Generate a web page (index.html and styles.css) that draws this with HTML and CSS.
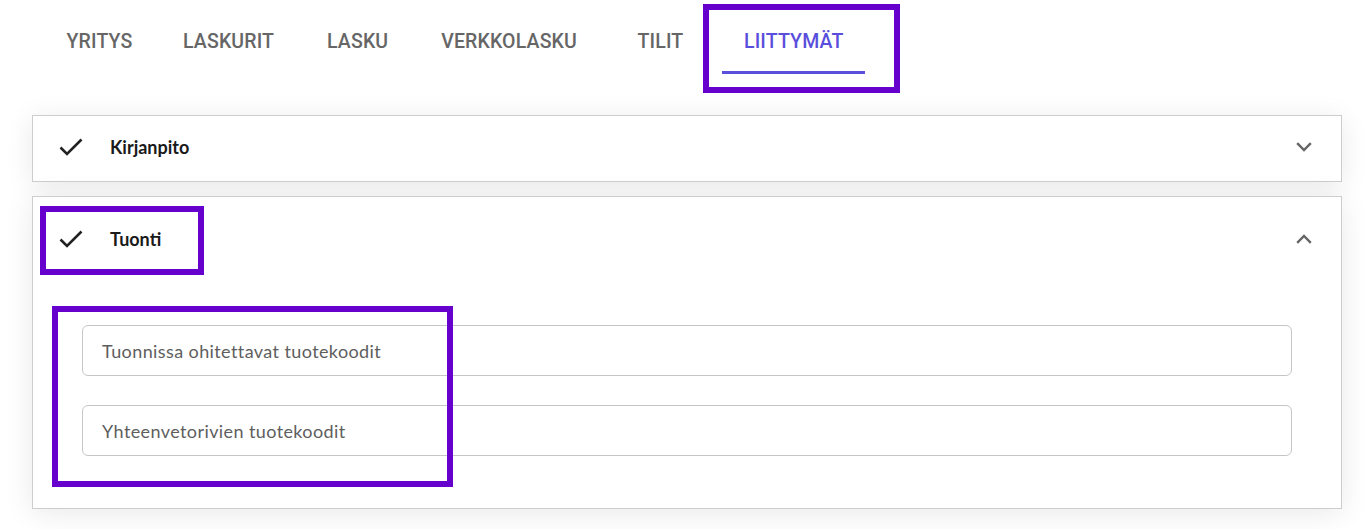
FILE: index.html
```html
<!DOCTYPE html>
<html lang="fi">
<head>
<meta charset="utf-8">
<title>Liittymät</title>
<link rel="stylesheet" href="styles.css">
</head>
<body>
<div class="page">
  <nav class="tabs">
    <a class="tab">YRITYS</a>
    <a class="tab">LASKURIT</a>
    <a class="tab">LASKU</a>
    <a class="tab">VERKKOLASKU</a>
    <a class="tab">TILIT</a>
    <a class="tab tab-active">LIITTYMÄT</a>
  </nav>

  <div class="panels">
    <section class="panel">
      <header class="panel-head">
        <svg class="check" viewBox="0 0 24 18" width="24" height="18"><path d="M1.5 9.5 L8 16 L22.5 1.5" fill="none" stroke="#222" stroke-width="2.6"/></svg>
        <span class="panel-title">Kirjanpito</span>
        <svg class="chev" viewBox="0 0 16 10" width="16" height="10"><path d="M1.2 1.2 L8 8 L14.8 1.2" fill="none" stroke="#666" stroke-width="2.4"/></svg>
      </header>
    </section>

    <section class="panel panel-open">
      <header class="panel-head panel-head-open">
        <svg class="check" viewBox="0 0 24 18" width="24" height="18"><path d="M1.5 9.5 L8 16 L22.5 1.5" fill="none" stroke="#222" stroke-width="2.6"/></svg>
        <span class="panel-title">Tuonti</span>
        <svg class="chev" viewBox="0 0 16 10" width="16" height="10"><path d="M1.2 8.8 L8 2 L14.8 8.8" fill="none" stroke="#666" stroke-width="2.4"/></svg>
      </header>
      <div class="panel-body">
        <input class="field" type="text" placeholder="Tuonnissa ohitettavat tuotekoodit">
        <input class="field" type="text" placeholder="Yhteenvetorivien tuotekoodit">
      </div>
    </section>
  </div>

  <div class="mark mark-tab"></div>
  <div class="mark mark-title"></div>
  <div class="mark mark-fields"></div>
</div>
</body>
</html>
```

FILE: styles.css
```css
* { box-sizing: border-box; }

html, body {
  margin: 0;
  padding: 0;
  background: #ffffff;
}

.page {
  position: relative;
  width: 1366px;
  height: 529px;
  overflow: hidden;
  font-family: Lato, "Liberation Sans", sans-serif;
}

.tabs {
  display: flex;
  height: 115px;
  padding-left: 38px;
  align-items: flex-start;
}

.tab {
  min-width: 123px;
  height: 74px;
  padding: 11px 22px 0;
  display: flex;
  justify-content: center;
  align-items: center;
  font-family: Roboto, "Liberation Sans", sans-serif;
  font-weight: 500;
  font-size: 19.5px;
  letter-spacing: 0.15px;
  color: #666666;
  border-bottom: 3px solid transparent;
}

.tab-active {
  color: #5a4fdc;
  border-bottom-color: #5a4fdc;
}

.panels {
  display: flex;
  flex-direction: column;
  gap: 14px;
  margin: 0 24px 0 32px;
}

.panel {
  background: #ffffff;
  border: 1px solid #cdcdcd;
  box-shadow: 0 4px 28px rgba(0, 0, 0, 0.09);
}

.panel-head {
  display: flex;
  align-items: center;
  height: 65px;
  padding: 0 29px 3px 26px;
}

.panel-head-open {
  height: 86px;
}

.check {
  flex: none;
  margin-right: 27px;
}

.panel-title {
  flex: 1;
  font-weight: 700;
  font-size: 18px;
  color: #1a1a1a;
}

.chev {
  flex: none;
}

.panel-body {
  display: flex;
  flex-direction: column;
  gap: 29px;
  padding: 42px 49px 52px;
}

.field {
  height: 51px;
  width: 100%;
  border: 1px solid #c6c6c6;
  border-radius: 6px;
  padding: 0 19px;
  font-family: Lato, "Liberation Sans", sans-serif;
  font-size: 18px;
  letter-spacing: 0.4px;
  color: #333;
  background: #fff;
  outline: none;
}

.field::placeholder {
  color: #5e5e5e;
}

.mark {
  position: absolute;
  border: 6px solid #6600cc;
  pointer-events: none;
}

.mark-tab {
  left: 703px;
  top: 4px;
  width: 197px;
  height: 89px;
}

.mark-title {
  left: 40px;
  top: 206px;
  width: 164px;
  height: 69px;
}

.mark-fields {
  left: 52px;
  top: 306px;
  width: 401px;
  height: 181px;
}
```
